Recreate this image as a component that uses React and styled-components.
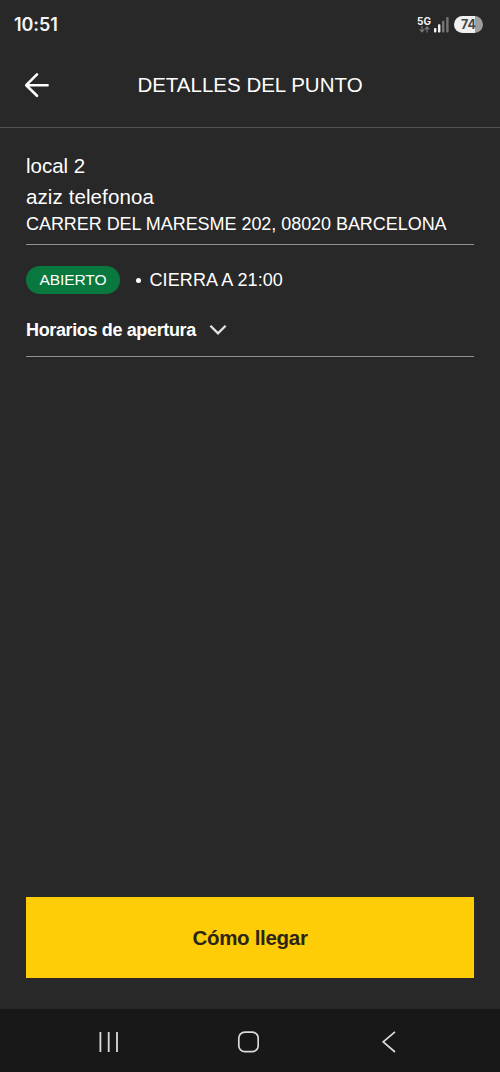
import styled, { createGlobalStyle } from "styled-components";

const GlobalStyle = createGlobalStyle`
  * {
    box-sizing: border-box;
  }

  body {
    margin: 0;
    background: #282828;
    font-family: "Liberation Sans", Arial, sans-serif;
    color: #fff;
  }

  h1, h2, p {
    margin: 0;
    font-weight: 400;
  }

  svg {
    display: block;
    flex: none;
  }
`;

const StatusBar = () => {
  return (
    <StatusRow>
      <Clock>10:51</Clock>
      <StatusIcons>
        <Network>
          <span>5G</span>
          <svg width="11" height="7" viewBox="0 0 11 7" fill="none" stroke="#777" strokeWidth="1.2">
            <path d="M3 0v5.6M0.8 3.4L3 5.8l2.2-2.4M8 6.6V1M5.8 3.3L8 0.9l2.2 2.4" />
          </svg>
        </Network>
        <svg width="15" height="16" viewBox="0 0 15 16">
          <rect x="0" y="11" width="2.4" height="4.5" rx="0.8" fill="#f2f2f2" />
          <rect x="4" y="7.3" width="2.4" height="8.2" rx="0.8" fill="#f2f2f2" />
          <rect x="8" y="3.7" width="2.4" height="11.8" rx="0.8" fill="#747474" />
          <rect x="12.2" y="0" width="2.4" height="15.5" rx="0.8" fill="#747474" />
        </svg>
        <Battery>74</Battery>
      </StatusIcons>
    </StatusRow>
  );
};

const App = () => {
  return (
    <Screen>
      <GlobalStyle />
      <StatusBar />

      <Header>
        <BackButton aria-label="Volver">
          <svg width="26" height="26" viewBox="0 0 26 26" fill="none" stroke="#fff" strokeWidth="2.6" strokeLinecap="round" strokeLinejoin="round">
            <path d="M23.6 13.2H2.4M13 2.4L2.2 13.2L13 23.8" />
          </svg>
        </BackButton>
        <Title>DETALLES DEL PUNTO</Title>
      </Header>

      <Main>
        {/* address */}
        <Address>
          <Name>local 2</Name>
          <Name $spacing="0.1px">aziz telefonoa</Name>
          <Street>CARRER DEL MARESME 202, 08020 BARCELONA</Street>
        </Address>

        {/* opening hours */}
        <Hours>
          <Status>
            <Badge>ABIERTO</Badge>
            <Dot />
            <Closing>CIERRA A 21:00</Closing>
          </Status>
          <Toggle>
            Horarios de apertura
            <svg width="18" height="12" viewBox="0 0 18 12" fill="none" stroke="#e4e4e4" strokeWidth="2.3">
              <path d="M1.4 1.7L9 9.3l7.6-7.6" />
            </svg>
          </Toggle>
        </Hours>

        <Directions>Cómo llegar</Directions>
      </Main>

      <NavBar>
        <svg width="20" height="22" viewBox="0 0 20 22" stroke="#dadada" strokeWidth="1.8">
          <path d="M1.4 1v20M9.7 1v20M18 1v20" />
        </svg>
        <svg width="22" height="22" viewBox="0 0 22 22" fill="none" stroke="#dadada" strokeWidth="1.7">
          <rect x="1.8" y="1.1" width="19.4" height="19.6" rx="6" />
        </svg>
        <svg width="14" height="22" viewBox="0 0 14 22" fill="none" stroke="#dadada" strokeWidth="1.7">
          <path d="M13 0.9L1.2 10.9L13 21" />
        </svg>
      </NavBar>
    </Screen>
  );
};

const Screen = styled.div`
  display: flex;
  flex-direction: column;
  width: 100%;
  height: 1072px;
  background: #282828;
`;

const StatusRow = styled.div`
  display: flex;
  justify-content: space-between;
  align-items: center;
  height: 48px;
  padding: 0 17px 0 14px;
`;

const Clock = styled.span`
  font-family: Inter, sans-serif;
  font-size: 18px;
  font-weight: 600;
  letter-spacing: -0.1px;
  color: #f4f4f4;
`;

const StatusIcons = styled.div`
  display: flex;
  align-items: center;

  > svg {
    margin: 1px 5px 0 3px;
  }
`;

const Network = styled.div`
  display: flex;
  flex-direction: column;
  align-items: center;
  width: 14px;

  span {
    font-family: Inter, sans-serif;
    font-size: 10px;
    font-weight: 700;
    line-height: 10px;
    color: #f4f4f4;
  }
`;

const Battery = styled.div`
  width: 29px;
  height: 17px;
  border-radius: 9px;
  background: linear-gradient(90deg, #efefef 74%, #9d9d9d 74%);
  font-family: Inter, sans-serif;
  font-size: 12.5px;
  font-weight: 700;
  line-height: 17px;
  text-align: center;
  color: #444;
`;

const Header = styled.header`
  display: grid;
  grid-template-columns: 26px 1fr 26px;
  align-items: center;
  height: 80px;
  padding: 0 24px 5px;
  border-bottom: 1px solid #505050;
`;

const BackButton = styled.button`
  padding: 0;
  border: none;
  background: none;
  cursor: pointer;
`;

const Title = styled.h1`
  font-size: 20.5px;
  line-height: 26px;
  text-align: center;
  white-space: nowrap;
`;

const Main = styled.main`
  flex: 1;
  display: flex;
  flex-direction: column;
  padding: 22px 26px 31px;
`;

const Address = styled.section`
  height: 95px;
  border-bottom: 1px solid #929292;
  white-space: nowrap;
`;

const Name = styled.h2`
  font-size: 20.5px;
  line-height: 31px;
  letter-spacing: ${({ $spacing }) => $spacing || "normal"};
`;

const Street = styled.p`
  font-size: 18px;
  line-height: 24px;
  letter-spacing: -0.05px;
`;

const Hours = styled.section`
  height: 112px;
  padding-top: 21px;
  border-bottom: 1px solid #929292;
`;

const Status = styled.div`
  display: flex;
  align-items: center;
  height: 28px;
`;

const Badge = styled.span`
  width: 94px;
  height: 28px;
  border-radius: 14px;
  background: #08783f;
  font-size: 15.5px;
  line-height: 28px;
  letter-spacing: -0.1px;
  text-align: center;
`;

const Dot = styled.span`
  width: 5px;
  height: 5px;
  margin: 0 8.5px 0 16px;
  border-radius: 50%;
  background: #fff;
`;

const Closing = styled.span`
  font-size: 18px;
  line-height: 28px;
  letter-spacing: 0.1px;
`;

const Toggle = styled.button`
  display: flex;
  align-items: center;
  gap: 13px;
  height: 28px;
  margin-top: 22px;
  padding: 0;
  border: none;
  background: none;
  color: #fff;
  font-family: inherit;
  font-size: 18px;
  font-weight: 700;
  letter-spacing: -0.36px;
  white-space: nowrap;
  cursor: pointer;
`;

const Directions = styled.button`
  height: 81px;
  margin-top: auto;
  border: none;
  background: #ffcc08;
  color: #2b2517;
  font-family: inherit;
  font-size: 20.5px;
  font-weight: 700;
  letter-spacing: -0.3px;
  cursor: pointer;
`;

const NavBar = styled.nav`
  display: grid;
  grid-template-columns: 138px 145px 14px;
  align-items: center;
  height: 63px;
  padding: 2px 0 0 99px;
  background: #181818;
`;

export default App;
